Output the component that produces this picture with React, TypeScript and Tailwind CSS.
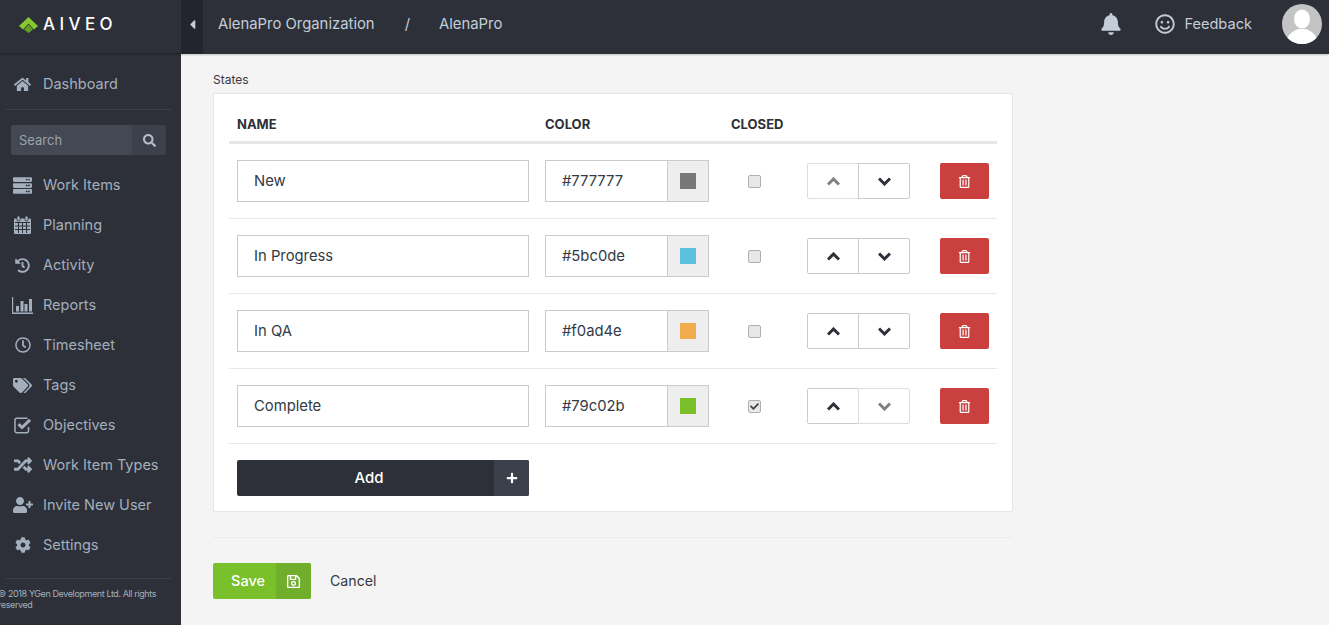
import type { ComponentType } from "react";
import {
  FaBell,
  FaCaretLeft,
  FaCheck,
  FaCog,
  FaHistory,
  FaHome,
  FaPlus,
  FaRandom,
  FaRegClock,
  FaRegSave,
  FaRegSmile,
  FaRegTrashAlt,
  FaSearch,
  FaServer,
  FaTags,
  FaUserPlus,
} from "react-icons/fa";

type Icon = ComponentType<{ className?: string }>;

const FONT = "font-['Inter','Noto_Sans',sans-serif]";

function CalendarIcon() {
  return (
    <svg width="17" height="18" viewBox="0 0 17 18" fill="currentColor">
      <path d="M0 3.5 Q0 2.5 1 2.5 H16 Q17 2.5 17 3.5 V17 Q17 18 16 18 H1 Q0 18 0 17 Z" />
      <rect x="3" y="0" width="3" height="5" rx="1.2" stroke="#2d3039" strokeWidth="0.8" />
      <rect x="11" y="0" width="3" height="5" rx="1.2" stroke="#2d3039" strokeWidth="0.8" />
      <path
        d="M1 6.5 H16 M1 10 H16 M1 13.5 H16 M4.5 6.5 V17 M8.5 6.5 V17 M12.5 6.5 V17"
        stroke="#2d3039"
        strokeWidth="1"
        fill="none"
      />
    </svg>
  );
}

function BarsIcon() {
  return (
    <svg width="21" height="17" viewBox="0 0 21 17" fill="currentColor">
      <path d="M0 0 H1.2 V15.5 H21 V17 H0 Z" />
      <rect x="4" y="9" width="3" height="5.5" />
      <rect x="8.5" y="4" width="3" height="10.5" />
      <rect x="12.5" y="7" width="3" height="7.5" />
      <rect x="17" y="2" width="3" height="12.5" />
    </svg>
  );
}

function CheckSquareIcon() {
  return (
    <svg width="18" height="17" viewBox="0 0 18 17" fill="none" stroke="currentColor">
      <path d="M13.5 1.2 H3 Q1 1.2 1 3.2 V13.8 Q1 15.8 3 15.8 H12.5 Q14.5 15.8 14.5 13.8 V10" strokeWidth="1.5" />
      <path d="M4.5 7.2 L8 10.5 L16 2.8" strokeWidth="3" />
    </svg>
  );
}

function Chevron({ up }: { up?: boolean }) {
  return (
    <svg width="13" height="9" viewBox="0 0 13 9" fill="none" stroke="currentColor" strokeWidth="3">
      <path d={up ? "M1 7.5 L6.5 2 L12 7.5" : "M1 1.5 L6.5 7 L12 1.5"} />
    </svg>
  );
}

const NAV_ITEMS: readonly { label: string; icon: Icon; size: string }[] = [
  { label: "Work Items", icon: FaServer, size: "text-[19px]" },
  { label: "Planning", icon: CalendarIcon, size: "" },
  { label: "Activity", icon: FaHistory, size: "text-[15px]" },
  { label: "Reports", icon: BarsIcon, size: "" },
  { label: "Timesheet", icon: FaRegClock, size: "text-[16px]" },
  { label: "Tags", icon: FaTags, size: "text-[19px]" },
  { label: "Objectives", icon: CheckSquareIcon, size: "" },
  { label: "Work Item Types", icon: FaRandom, size: "text-[18px]" },
  { label: "Invite New User", icon: FaUserPlus, size: "text-[20px]" },
  { label: "Settings", icon: FaCog, size: "text-[16px]" },
];

const STATES = [
  { name: "New", color: "#777777", closed: false, first: true, last: false },
  { name: "In Progress", color: "#5bc0de", closed: false, first: false, last: false },
  { name: "In QA", color: "#f0ad4e", closed: false, first: false, last: false },
  { name: "Complete", color: "#79c02b", closed: true, first: false, last: true },
];

function NavLink({ label, icon: Icon, size }: { label: string; icon: Icon; size: string }) {
  return (
    <a className="flex h-10 items-center text-[14.5px] text-[#a3afbd]">
      <span className="flex w-[43px] shrink-0 justify-center pl-[2px]">
        <Icon className={size} />
      </span>
      <span>{label}</span>
    </a>
  );
}

function Sidebar() {
  return (
    <aside className="flex w-[181px] shrink-0 flex-col bg-[#2d3039]">
      <div className="pt-[10px]">
        <NavLink label="Dashboard" icon={FaHome} size="text-[17px]" />
      </div>
      <div className="ml-[6px] mr-[10px] mt-[5px] border-t border-[#3c404a]" />
      <div className="ml-[11px] mr-[15px] mt-[15px] flex h-[30px] overflow-hidden rounded-[3px] bg-[#434852]">
        <input
          placeholder="Search"
          className="w-[121px] bg-transparent pl-2 pt-px text-[13px] text-white outline-none placeholder:text-[#99a3af]"
        />
        <span className="flex flex-1 items-center justify-center bg-[#3c404a] text-[13px] text-[#b4bdc8]">
          <FaSearch />
        </span>
      </div>
      <nav className="mt-[10px]">
        {NAV_ITEMS.map((item) => (
          <NavLink key={item.label} {...item} />
        ))}
      </nav>
      <div className="ml-[6px] mr-[10px] mt-[13px] border-t border-[#3c404a]" />
      <p className="ml-[-2px] mt-[9px] w-[165px] text-[9px] leading-[11px] tracking-[-0.4px] text-[#a3afbd]">
        © 2018 YGen Development Ltd. All rights reserved
      </p>
    </aside>
  );
}

function Header() {
  return (
    <header className="relative z-10 flex h-[54px] shrink-0 bg-[#2d3039] shadow-[0_1px_2px_rgba(0,0,0,0.2)]">
      <div className="flex h-full w-[181px] items-center border-b border-[#24262c] pb-[5px] pl-[19px]">
        <svg width="19" height="16" viewBox="0 0 19 16" className="mt-[1px]">
          <path d="M9.5 0 L19 9 L15 12.5 L9.5 6.5 L4 12.5 L0 9 Z" fill="#86c92e" />
          <path d="M9.5 7.5 L14 12.5 L9.5 16 L5 12.5 Z" fill="#649f26" />
        </svg>
        <span className="ml-[5px] text-[17px] font-medium leading-none tracking-[4.4px] text-white">AIVEO</span>
      </div>
      <div className="flex h-full w-[22px] items-center justify-center bg-[#22252b] pb-[6px] text-[15px] text-[#c5ccd4]">
        <FaCaretLeft />
      </div>
      <div className="flex h-full flex-1 items-center pb-[6px] text-[#c3cdd8]">
        <div className="flex flex-1 items-center pl-[15px] text-[14.85px]">
          <span>AlenaPro Organization</span>
          <span className="ml-[30px]">/</span>
          <span className="ml-[29px]">AlenaPro</span>
        </div>
        <FaBell className="text-[22px]" />
        <div className="ml-[33px] flex items-center text-[14.6px]">
          <FaRegSmile className="text-[20px]" />
          <span className="ml-[9px] mt-[2px]">Feedback</span>
        </div>
        <div className="ml-[30px] mr-[7px] h-10 w-10 overflow-hidden rounded-full bg-[#c4c4c4]">
          <svg viewBox="0 0 40 40" className="h-full w-full">
            <ellipse cx="20" cy="15" rx="8" ry="9.5" fill="#fff" />
            <path d="M4 40 C5 29 12 27 16 25 H24 C28 27 35 29 36 40 Z" fill="#fff" />
          </svg>
        </div>
      </div>
    </header>
  );
}

function StateRow({ state }: { state: (typeof STATES)[number] }) {
  const inputClass = "border border-[#cbcbcb] bg-white text-[#333a45] outline-none";
  return (
    <div className="flex h-[75px] items-center border-b border-[#e8e8e8] px-2">
      <input defaultValue={state.name} className={`${inputClass} h-[42px] w-[292px] pl-4 text-[14.8px]`} />
      <div className="ml-4 flex h-[42px] w-[164px]">
        <input defaultValue={state.color} className={`${inputClass} w-[123px] pl-4 text-[14.8px]`} />
        <span className="flex w-[41px] items-center justify-center border border-l-0 border-[#cbcbcb] bg-[#eeeeee]">
          <span
            className="h-4 w-4"
            style={{ backgroundColor: state.color }}
          />
        </span>
      </div>
      <span className="ml-[39px] flex h-[13px] w-[13px] items-center justify-center rounded-[2px] border border-[#b0b0b0] bg-[#e8e8e8] text-[9px] text-[#444]">
        {state.closed && <FaCheck />}
      </span>
      <div className="ml-[46px] flex h-9 w-[103px]">
        <button
          className={`flex w-[52px] items-center justify-center rounded-l-[2px] border ${
            state.first ? "border-[#dddddd] text-[#808080]" : "border-[#cbcbcb] text-[#2d3039]"
          }`}
        >
          <Chevron up />
        </button>
        <button
          className={`-ml-px flex w-[52px] items-center justify-center rounded-r-[2px] border ${
            state.last ? "border-[#dddddd] text-[#808080]" : "border-[#cbcbcb] text-[#2d3039]"
          }`}
        >
          <Chevron />
        </button>
      </div>
      <button className="ml-[30px] flex h-9 w-[49px] items-center justify-center rounded-[2px] bg-[#c9403e] text-[13px] text-white">
        <FaRegTrashAlt />
      </button>
    </div>
  );
}

export default function App() {
  return (
    <div className={`flex h-screen flex-col overflow-hidden bg-[#f4f4f4] ${FONT}`}>
      <Header />
      <div className="flex min-h-0 flex-1">
        <Sidebar />
        <main className="ml-[32px] w-[800px] pt-[19px]">
          <h2 className="text-[12px] leading-[14px] text-[#3d3546]">States</h2>
          <section className="mt-[6px] h-[419px] rounded-[2px] border border-[#e6e6e6] bg-white px-[15px]">
            <div className="flex h-[50px] items-center border-b-[3px] border-[#e6e6e6] px-2 pt-[15px] text-[13px] font-bold text-[#2d3039]">
              <span className="w-[308px]">NAME</span>
              <span className="w-[186px]">COLOR</span>
              <span>CLOSED</span>
            </div>
            {STATES.map((state) => (
              <StateRow key={state.name} state={state} />
            ))}
            <button className="ml-2 mt-4 flex h-9 w-[292px] items-center overflow-hidden rounded-[2px] bg-[#2d3039] text-[15px] font-medium text-white">
              <span className="flex-1 pl-[7px]">Add</span>
              <span className="flex h-full w-[35px] items-center justify-center bg-[#3c404a] text-[12px]">
                <FaPlus />
              </span>
            </button>
          </section>
          <div className="mt-[25px] border-t border-[#ebebeb]" />
          <div className="mt-[25px] flex items-center">
            <button className="flex h-9 w-[98px] items-center overflow-hidden rounded-[2px] bg-[#79c02b] text-[14.5px] font-medium text-white">
              <span className="flex-1 pl-[7px]">Save</span>
              <span className="flex h-full w-[35px] items-center justify-center bg-[#70ae2b] text-[15px]">
                <FaRegSave />
              </span>
            </button>
            <a className="ml-[19px] text-[14.2px] text-[#333a45]">Cancel</a>
          </div>
        </main>
      </div>
    </div>
  );
}
